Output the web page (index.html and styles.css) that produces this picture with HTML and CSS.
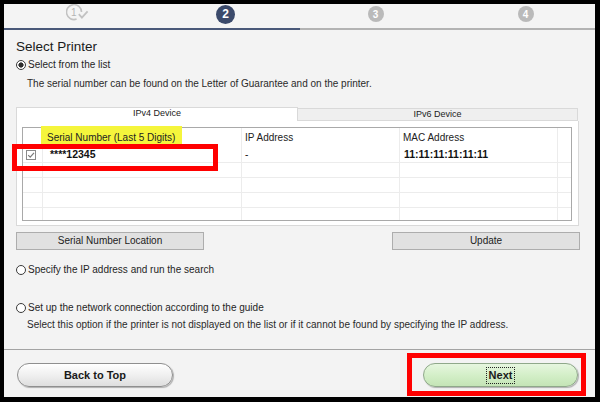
FILE: index.html
```html
<!DOCTYPE html>
<html lang="en">
<head>
<meta charset="utf-8">
<title>Select Printer</title>
<link rel="stylesheet" href="styles.css">
</head>
<body>
<div class="window">
  <div class="steps">
    <div class="step done">
      <svg width="26" height="20" viewBox="0 0 26 20">
        <path d="M10.6 15.1 A7.5 7.5 0 1 1 15.5 8" fill="none" stroke="#c2c2c2" stroke-width="1.6"/>
        <path d="M12.8 10.2 L15.9 13.6 L21.6 7.4" fill="none" stroke="#c2c2c2" stroke-width="1.8"/>
        <text x="7.8" y="11.8" font-family="Liberation Sans, Arial, sans-serif" font-size="10" fill="#b5b5b5" text-anchor="middle">1</text>
      </svg>
    </div>
    <div class="step"><span class="num cur">2</span></div>
    <div class="step"><span class="num todo">3</span></div>
    <div class="step"><span class="num todo">4</span></div>
  </div>
  <div class="progress"></div>

  <div class="main">
    <h1 class="title">Select Printer</h1>
    <div class="radio-row"><span class="radio on"></span>Select from the list</div>
    <div class="note">The serial number can be found on the Letter of Guarantee and on the printer.</div>

    <div class="tabs">
      <div class="tabstrip">
        <div class="tab active">IPv4 Device</div>
        <div class="tab inactive">IPv6 Device</div>
      </div>
      <div class="panel">
        <div class="list">
          <div class="row head">
            <div class="c"></div>
            <div class="c serial"><span class="hl">Serial Number (Last 5 Digits)</span></div>
            <div class="c">IP Address</div>
            <div class="c">MAC Address</div>
            <div class="c last"></div>
          </div>
          <div class="row item">
            <div class="c chk"><span class="checkbox"><svg width="8" height="8" viewBox="0 0 8 8"><path d="M1.2 4.1 L3.2 6.1 L7 1.8" fill="none" stroke="#7a7a7a" stroke-width="1.2"/></svg></span></div>
            <div class="c sval">****12345</div>
            <div class="c ipval">-</div>
            <div class="c macval">11:11:11:11:11:11</div>
            <div class="c last"></div>
          </div>
          <div class="row item"><div class="c"></div><div class="c"></div><div class="c"></div><div class="c"></div><div class="c last"></div></div>
          <div class="row item"><div class="c"></div><div class="c"></div><div class="c"></div><div class="c"></div><div class="c last"></div></div>
          <div class="row item"><div class="c"></div><div class="c"></div><div class="c"></div><div class="c"></div><div class="c last"></div></div>
          <div class="row filler"><div class="c"></div><div class="c"></div><div class="c"></div><div class="c"></div><div class="c last"></div></div>
          <div class="mark"></div>
        </div>
      </div>
    </div>

    <div class="btnrow">
      <div class="btn">Serial Number Location</div>
      <div class="btn">Update</div>
    </div>

    <div class="radio-row r2"><span class="radio"></span>Specify the IP address and run the search</div>
    <div class="radio-row r3"><span class="radio"></span>Set up the network connection according to the guide</div>
    <div class="note n2">Select this option if the printer is not displayed on the list or if it cannot be found by specifying the IP address.</div>
  </div>

  <div class="footer">
    <div class="pill back">Back to Top</div>
    <div class="annot">
      <div class="pill next"><span class="focus">Next</span></div>
    </div>
  </div>
</div>
</body>
</html>
```
FILE: styles.css
```css
* { box-sizing: border-box; }
html, body { margin: 0; padding: 0; }
body {
  background: #000;
  font-family: "Liberation Sans", Arial, sans-serif;
  font-size: 10px;
  color: #1f1f1f;
}
.window {
  width: 600px;
  height: 402px;
  border-style: solid;
  border-color: #000;
  border-width: 4px 5px 5px 4px;
  background: #f3f3f3;
  display: flex;
  flex-direction: column;
}
.steps {
  height: 24px;
  flex: none;
  display: flex;
  align-items: center;
  gap: 130px;
  padding: 0 0 4px 61.5px;
  background: #f4f4f4;
}
.step {
  width: 20px;
  height: 20px;
  display: flex;
  align-items: center;
  justify-content: center;
}
.step.done { justify-content: flex-start; overflow: visible; }
.step.done svg { flex: none; display: block; }
.num {
  border-radius: 50%;
  color: #fff;
  font-weight: bold;
  display: flex;
  align-items: center;
  justify-content: center;
  flex: none;
}
.num.cur { width: 19px; height: 19px; background: #3b4a6b; font-size: 12px; }
.num.todo { width: 16px; height: 16px; background: #bababa; font-size: 10px; }
.progress {
  height: 2px;
  flex: none;
  background: linear-gradient(to right, #4a5979 0, #4a5979 296px, #b3b3b3 296px, #b3b3b3 100%);
}
.main {
  flex: 1;
  padding: 9px 15px 0 12px;
}
.title {
  margin: 0;
  font-size: 13.5px;
  font-weight: normal;
  line-height: 16px;
  color: #1a1a1a;
}
.radio-row {
  display: flex;
  align-items: center;
  line-height: 12px;
  margin-top: 4px;
}
.radio {
  width: 10px;
  height: 10px;
  border: 1px solid #3a3a3a;
  border-radius: 50%;
  background: #fff;
  margin-right: 2px;
  flex: none;
}
.radio.on { background: radial-gradient(circle, #2e2e2e 0, #2e2e2e 2.3px, #fff 2.9px); }
.note {
  margin: 7px 0 0 11px;
  line-height: 12px;
  color: #2a2a2a;
}
.tabs { margin-top: 17px; width: 563px; }
.tabstrip {
  display: flex;
  align-items: flex-start;
  height: 14px;
}
.tab {
  font-size: 9px;
  line-height: 11px;
  text-align: center;
  border: 1px solid #d9d9d9;
  border-bottom: none;
  color: #222;
}
.tab.active { width: 282px; height: 14px; background: #fff; }
.tab.inactive {
  width: 280px;
  height: 13px;
  margin-top: 1px;
  background: #efefef;
  border-left: none;
  border-bottom: 1px solid #d9d9d9;
}
.panel {
  background: #fff;
  border: 1px solid #d9d9d9;
  border-top: none;
  padding: 6px 6px 4px 5px;
}
.list {
  height: 94px;
  border: 1px solid #a9a9a9;
  position: relative;
  display: flex;
  flex-direction: column;
}
.row {
  display: grid;
  grid-template-columns: 20px 199px 158px 158px 1fr;
}
.c { border-right: 1px solid #ececec; padding-left: 3px; }
.c.last { border-right: none; }
.head { height: 20px; }
.head .c { padding-top: 4px; line-height: 12px; color: #222; }
.head .c.serial { padding-left: 4px; }
.hl {
  display: inline-block;
  background: #f5f53c;
  margin: -6px 0 0 -6px;
  padding: 6px 7px 0 6px;
  line-height: 12px;
}
.item {
  height: 15px;
  border-bottom: 1px solid #ececec;
  line-height: 13px;
  font-size: 10.5px;
  font-weight: bold;
  color: #111;
}
.item .sval { padding-left: 7px; }
.item .ipval { font-weight: normal; font-size: 10px; }
.item .macval { padding-left: 4px; }
.chk { display: flex; align-items: center; }
.checkbox {
  width: 10px;
  height: 10px;
  border: 1px solid #8a8a8a;
  background: #fff;
  display: flex;
  align-items: center;
  justify-content: center;
}
.checkbox svg { display: block; }
.filler { flex: 1; }
.mark {
  position: absolute;
  left: -11px;
  top: 16px;
  width: 206px;
  height: 27px;
  border: 5px solid #f00;
  pointer-events: none;
}
.btnrow {
  display: flex;
  justify-content: space-between;
  margin-top: 6px;
}
.btn {
  width: 188px;
  height: 18px;
  border: 1px solid #adadad;
  background: #e1e1e1;
  display: flex;
  align-items: center;
  justify-content: center;
  line-height: 12px;
  color: #222;
}
.radio-row.r2 { margin-top: 14px; }
.radio-row.r3 { margin-top: 26px; }
.note.n2 { margin-top: 5px; }
.footer {
  height: 48px;
  flex: none;
  border-top: 1px solid #a3a3a3;
  display: flex;
  justify-content: space-between;
  align-items: flex-start;
  padding: 0 9px 0 13px;
}
.pill {
  height: 24px;
  border-radius: 12px;
  border: 1px solid #8f8f8f;
  font-weight: bold;
  font-size: 11px;
  display: flex;
  align-items: center;
  justify-content: center;
  box-shadow: 1px 1px 1px rgba(0, 0, 0, 0.28);
  color: #1a1a1a;
}
.pill.back {
  width: 156px;
  margin-top: 13px;
  background: linear-gradient(#ffffff, #eeeeee 55%, #dedede);
}
.annot {
  margin-top: 3px;
  border: 5px solid #f00;
  padding: 5px 3px 4px 11px;
}
.pill.next {
  width: 155px;
  border-color: #8fa88a;
  background: linear-gradient(#e6f6df, #d2eec6 55%, #c4e4b6);
}
.focus {
  outline: 1px dotted #222;
  padding: 1px 2px;
  line-height: 13px;
}
```
